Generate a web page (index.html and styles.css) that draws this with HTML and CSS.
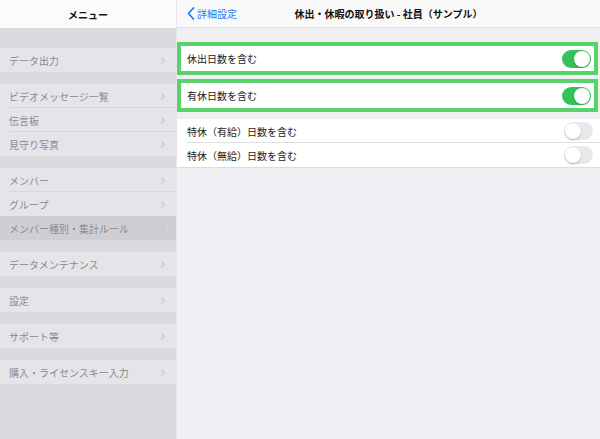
FILE: index.html
```html
<!DOCTYPE html>
<html lang="ja">
<head>
<meta charset="utf-8">
<link rel="stylesheet" href="styles.css">
</head>
<body>
<div class="app">
  <aside class="sidebar">
    <div class="side-head">メニュー</div>
    <div class="band band-first"></div>
    <div class="row"><span>データ出力</span><i class="chev"></i></div>
    <div class="band"></div>
    <div class="row sep"><span>ビデオメッセージ一覧</span><i class="chev"></i></div>
    <div class="row sep"><span>伝言板</span><i class="chev"></i></div>
    <div class="row"><span>見守り写真</span><i class="chev"></i></div>
    <div class="band"></div>
    <div class="row sep"><span>メンバー</span><i class="chev"></i></div>
    <div class="row"><span>グループ</span><i class="chev"></i></div>
    <div class="row active"><span>メンバー種別・集計ルール</span><i class="chev"></i></div>
    <div class="band"></div>
    <div class="row"><span>データメンテナンス</span><i class="chev"></i></div>
    <div class="band"></div>
    <div class="row"><span>設定</span><i class="chev"></i></div>
    <div class="band"></div>
    <div class="row"><span>サポート等</span><i class="chev"></i></div>
    <div class="band"></div>
    <div class="row"><span>購入・ライセンスキー入力</span><i class="chev"></i></div>
  </aside>
  <main class="detail">
    <header class="detail-head">
      <div class="back">
        <svg width="8" height="13" viewBox="0 0 8 13"><path d="M6.5 1 L1.5 6.5 L6.5 12" fill="none" stroke="#1a7cf5" stroke-width="1.8" stroke-linecap="round" stroke-linejoin="round"/></svg>
        <span>詳細設定</span>
      </div>
      <div class="title">休出・休暇の取り扱い - 社員（サンプル）</div>
    </header>
    <div class="hl">
      <div class="drow"><span>休出日数を含む</span><span class="toggle on"></span></div>
    </div>
    <div class="hl">
      <div class="drow"><span>有休日数を含む</span><span class="toggle on"></span></div>
    </div>
    <div class="group">
      <div class="drow dsep"><span>特休（有給）日数を含む</span><span class="toggle"></span></div>
      <div class="drow"><span>特休（無給）日数を含む</span><span class="toggle"></span></div>
    </div>
  </main>
</div>
</body>
</html>
```

FILE: styles.css
```css
* { box-sizing: border-box; }
html, body { margin: 0; padding: 0; }
body {
  width: 600px;
  height: 439px;
  overflow: hidden;
  font-family: "Noto Sans CJK JP", "Noto Sans", sans-serif;
  font-size: 10px;
}
.app { display: flex; height: 439px; }

.sidebar {
  width: 177px;
  background: #dbdbdf;
  border-right: 1px solid #e6e6ea;
  display: flex;
  flex-direction: column;
}
.side-head {
  height: 28px;
  background: #fbfbfb;
  display: flex;
  align-items: center;
  justify-content: center;
  font-weight: bold;
  color: #111;
  font-size: 10px;
}
.band { height: 12px; background: #dbdbdf; }
.band-first { height: 20px; }
.row {
  height: 24px;
  background: #e5e5e9;
  display: flex;
  align-items: center;
  justify-content: space-between;
  padding: 0 12px 0 9px;
  color: #8a8a8e;
  position: relative;
}
.row.sep::after {
  content: "";
  position: absolute;
  left: 9px; right: 0; bottom: 0;
  height: 1px;
  background: #d8d8dc;
}
.row.active { background: #cfcfd3; }
.chev {
  width: 5px; height: 5px;
  border-top: 1.2px solid #c4c4c8;
  border-right: 1.2px solid #c4c4c8;
  transform: rotate(45deg);
}

.detail {
  flex: 1;
  background: #efeff4;
  display: flex;
  flex-direction: column;
}
.detail-head {
  height: 28px;
  background: #f9f9f9;
  border-bottom: 1px solid #e2e2e4;
  display: flex;
  align-items: center;
  position: relative;
  margin-bottom: 14px;
}
.back {
  display: flex;
  align-items: center;
  gap: 2px;
  padding-left: 10px;
  color: #1a7cf5;
  font-size: 10px;
}
.title {
  position: absolute;
  left: 0; right: 0;
  text-align: center;
  font-weight: bold;
  color: #111;
  pointer-events: none;
}
.hl {
  margin: 0 2px 4px 0;
  border: 4px solid #5ad26c;
}
.hl .drow { height: 25px; }
.drow {
  height: 24px;
  background: #fff;
  display: flex;
  align-items: center;
  justify-content: space-between;
  padding: 0 6px 0 9px;
  color: #222;
  position: relative;
}
.hl .drow { padding: 0 3px 0 6px; }
.group {
  margin-top: 3px;
  border-bottom: 1px solid #dcdce0;
}
.group .drow { padding-left: 10px; padding-right: 7px; }
.dsep::after {
  content: "";
  position: absolute;
  left: 10px; right: 0; bottom: 0;
  height: 1px;
  background: #e0e0e4;
}
.toggle {
  width: 29px;
  height: 18px;
  border-radius: 9px;
  background: #e9e9ec;
  position: relative;
}
.toggle::after {
  content: "";
  position: absolute;
  top: 1px; left: 1px;
  width: 16px; height: 16px;
  border-radius: 50%;
  background: #fff;
  box-shadow: 0 1px 2px rgba(0,0,0,0.25);
}
.toggle.on { background: #34c35a; }
.toggle.on::after { left: 12px; }
```
